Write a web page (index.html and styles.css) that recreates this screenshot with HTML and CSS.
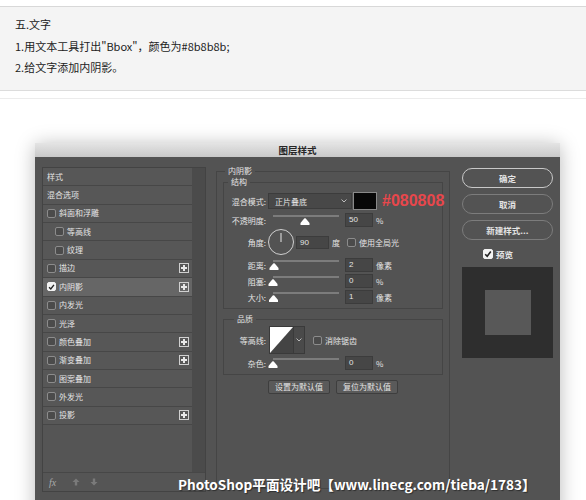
FILE: index.html
```html
<!DOCTYPE html>
<html lang="zh">
<head>
  <meta charset="UTF-8">
  <title>内阴影</title>
  <link rel="stylesheet" href="styles.css">
</head>
<body>
  <div class="note">
    <p>五.文字</p>
    <p>1.用文本工具打出"Bbox"，颜色为#8b8b8b;</p>
    <p>2.给文字添加内阴影。</p>
  </div>
  <div class="rule"></div>

  <div class="dialog">
    <div class="titlebar">图层样式</div>
    <div class="dialog-body">

      <!-- 左侧样式列表 -->
      <div class="styles-panel">
        <div class="styles-list">
          <ul class="rows">
            <li class="row">样式</li>
            <li class="row">混合选项</li>
            <li class="row"><span class="box"></span>斜面和浮雕</li>
            <li class="row sub"><span class="box"></span>等高线</li>
            <li class="row sub"><span class="box"></span>纹理</li>
            <li class="row"><span class="box"></span>描边<span class="plus"></span></li>
            <li class="row active"><span class="box checked"><svg viewBox="0 0 8 8" width="8" height="8"><path d="M1.2 4.2 L3.2 6.2 L6.8 1.6" fill="none" stroke="#222" stroke-width="1.6"/></svg></span>内阴影<span class="plus"></span></li>
            <li class="row"><span class="box"></span>内发光</li>
            <li class="row"><span class="box"></span>光泽</li>
            <li class="row"><span class="box"></span>颜色叠加<span class="plus"></span></li>
            <li class="row"><span class="box"></span>渐变叠加<span class="plus"></span></li>
            <li class="row"><span class="box"></span>图案叠加</li>
            <li class="row"><span class="box"></span>外发光</li>
            <li class="row"><span class="box"></span>投影<span class="plus"></span></li>
          </ul>
          <div class="scroll"></div>
        </div>
        <div class="fx-bar">
          <span class="fx">fx</span>
          <svg width="8" height="8" viewBox="0 0 8 8"><path d="M4 0.5 L7.5 4 L5.2 4 L5.2 7.5 L2.8 7.5 L2.8 4 L0.5 4 Z" fill="#7a7a7a"/></svg>
          <svg width="8" height="8" viewBox="0 0 8 8"><path d="M4 7.5 L7.5 4 L5.2 4 L5.2 0.5 L2.8 0.5 L2.8 4 L0.5 4 Z" fill="#7a7a7a"/></svg>
        </div>
      </div>

      <!-- 中间设置 -->
      <div class="settings">
        <fieldset class="group outer">
          <legend>内阴影</legend>

          <fieldset class="group inner">
            <legend>结构</legend>
            <div class="field mode">
              <span class="lbl">混合模式:</span>
              <span class="select">正片叠底<svg width="6" height="4" viewBox="0 0 6 4"><path d="M0.5 0.5 L3 3 L5.5 0.5" fill="none" stroke="#bbb" stroke-width="1"/></svg></span>
              <span class="swatch"></span>
              <span class="hex">#080808</span>
            </div>
            <div class="field opacity">
              <span class="lbl">不透明度:</span>
              <svg class="slider" width="76" height="14" viewBox="0 0 76 14"><line x1="5" y1="3" x2="71" y2="3" stroke="#7c7c7c" stroke-width="2"/><path d="M32.5 12 L41.5 12 L41.5 10 L37.8 5.6 Q37 5 36.2 5.6 L32.5 10 Z" fill="#fff"/></svg>
              <span class="num">50</span><span class="unit">%</span>
            </div>
            <div class="field angle">
              <span class="lbl">角度:</span>
              <svg class="dial" width="28" height="28" viewBox="0 0 28 28"><circle cx="14" cy="14" r="12.5" fill="none" stroke="#cfcfcf" stroke-width="1"/><line x1="14" y1="14" x2="14" y2="5" stroke="#cfcfcf" stroke-width="1.2"/></svg>
              <span class="num wide">90</span><span class="unit">度</span>
              <span class="box"></span><span class="chk-text">使用全局光</span>
            </div>
            <div class="field short">
              <span class="lbl">距离:</span>
              <svg class="slider" width="76" height="14" viewBox="0 0 76 14"><line x1="5" y1="3" x2="71" y2="3" stroke="#7c7c7c" stroke-width="2"/><path d="M1.5 12 L10.5 12 L10.5 10 L6.8 5.6 Q6 5 5.2 5.6 L1.5 10 Z" fill="#fff"/></svg>
              <span class="num">2</span><span class="unit">像素</span>
            </div>
            <div class="field short">
              <span class="lbl">阻塞:</span>
              <svg class="slider" width="76" height="14" viewBox="0 0 76 14"><line x1="5" y1="3" x2="71" y2="3" stroke="#7c7c7c" stroke-width="2"/><path d="M0.5 12 L9.5 12 L9.5 10 L5.8 5.6 Q5 5 4.2 5.6 L0.5 10 Z" fill="#fff"/></svg>
              <span class="num">0</span><span class="unit">%</span>
            </div>
            <div class="field short">
              <span class="lbl">大小:</span>
              <svg class="slider" width="76" height="14" viewBox="0 0 76 14"><line x1="5" y1="3" x2="71" y2="3" stroke="#7c7c7c" stroke-width="2"/><path d="M1 12 L10 12 L10 10 L6.3 5.6 Q5.5 5 4.7 5.6 L1 10 Z" fill="#fff"/></svg>
              <span class="num">1</span><span class="unit">像素</span>
            </div>
          </fieldset>

          <fieldset class="group inner quality">
            <legend>品质</legend>
            <div class="field contour-row">
              <span class="lbl">等高线:</span>
              <span class="contour">
                <svg width="23" height="26" viewBox="0 0 23 26"><rect width="23" height="26" fill="#444"/><path d="M0 0 L23 0 L0 26 Z" fill="#fff"/></svg>
                <span class="drop"><svg width="6" height="4" viewBox="0 0 6 4"><path d="M0.5 0.5 L3 3 L5.5 0.5" fill="none" stroke="#bbb" stroke-width="1"/></svg></span>
              </span>
              <span class="box"></span><span class="chk-text">消除锯齿</span>
            </div>
            <div class="field noise">
              <span class="lbl">杂色:</span>
              <svg class="slider" width="76" height="14" viewBox="0 0 76 14"><line x1="5" y1="3" x2="71" y2="3" stroke="#7c7c7c" stroke-width="2"/><path d="M0.5 12 L9.5 12 L9.5 10 L5.8 5.6 Q5 5 4.2 5.6 L0.5 10 Z" fill="#fff"/></svg>
              <span class="num">0</span><span class="unit">%</span>
            </div>
          </fieldset>

          <div class="defaults">
            <span class="btn-small">设置为默认值</span>
            <span class="btn-small">复位为默认值</span>
          </div>
        </fieldset>
      </div>

      <!-- 右侧按钮 -->
      <div class="actions">
        <span class="pill primary">确定</span>
        <span class="pill">取消</span>
        <span class="pill">新建样式...</span>
        <div class="preview-toggle">
          <span class="box checked"><svg viewBox="0 0 8 8" width="8" height="8"><path d="M1.2 4.2 L3.2 6.2 L6.8 1.6" fill="none" stroke="#222" stroke-width="1.6"/></svg></span>预览
        </div>
        <div class="preview"><div class="preview-square"></div></div>
      </div>
    </div>

    <div class="watermark">PhotoShop平面设计吧【www.linecg.com/tieba/1783】</div>
  </div>
</body>
</html>
```

FILE: styles.css
```css
body {
  margin: 0;
  background: #fff;
  font-family: "Noto Sans CJK SC", "Liberation Sans", sans-serif;
  overflow: hidden;
}

/* 顶部说明 */
.note {
  margin-top: 6px;
  height: 85px;
  padding: 7px 15px 0;
  box-sizing: border-box;
  background: #f4f4f4;
  border-top: 1px solid #d8d8d8;
  border-bottom: 1px solid #dcdcdc;
}

.note p {
  margin: 0;
  font-size: 11px;
  line-height: 21.5px;
  color: #222;
}

.rule {
  margin-top: 7px;
  border-top: 1px solid #ececec;
}

/* 对话框 */
.dialog {
  position: relative;
  margin: 44px 0 0 35px;
  width: 525px;
  height: 380px;
  background: #535353;
  box-shadow: 0 2px 18px rgba(0, 0, 0, 0.28);
  color: #e4e4e4;
  font-size: 8px;
}

.titlebar {
  height: 14px;
  line-height: 14px;
  text-align: center;
  font-size: 9.5px;
  font-weight: bold;
  color: #262626;
  background: linear-gradient(#e4e4e4, #c9c9c9);
}

.dialog-body {
  display: flex;
  align-items: flex-start;
  padding: 10px 7px 0;
}

/* 左侧列表 */
.styles-panel {
  width: 164px;
  border: 1px solid #434343;
  box-sizing: border-box;
  background: #555;
}

.styles-list {
  display: flex;
  height: 304px;
}

.rows {
  list-style: none;
  margin: 0;
  padding: 0;
  width: 149px;
}

.row {
  display: flex;
  align-items: center;
  height: 18.36px;
  box-sizing: border-box;
  padding-left: 4px;
  padding-right: 3px;
  border-bottom: 1px solid #474747;
  background: #575757;
  line-height: 1;
}

.row.sub {
  padding-left: 12px;
}

.row.active {
  background: #666;
}

.box {
  display: inline-flex;
  align-items: center;
  justify-content: center;
  width: 7px;
  height: 7px;
  margin-right: 3px;
  border: 1px solid #8c8c8c;
  border-radius: 2px;
  background: #4b4b4b;
  flex: none;
}

.box.checked {
  background: #f2f2f2;
  border-color: #f2f2f2;
}

.plus {
  margin-left: auto;
  width: 8px;
  height: 8px;
  border: 1px solid #d0d0d0;
  position: relative;
}

.plus::before,
.plus::after {
  content: "";
  position: absolute;
  background: #e8e8e8;
}

.plus::before {
  left: 1px;
  right: 1px;
  top: 3px;
  height: 2px;
}

.plus::after {
  top: 1px;
  bottom: 1px;
  left: 3px;
  width: 2px;
}

.scroll {
  width: 13px;
  background: #4b4b4b;
}

.fx-bar {
  display: flex;
  align-items: center;
  gap: 10px;
  height: 18px;
  padding-left: 6px;
  border-top: 1px solid #474747;
}

.fx {
  font-family: "Liberation Serif", serif;
  font-style: italic;
  font-size: 10px;
  color: #aaa;
  width: 13px;
}

/* 中间设置 */
.settings {
  width: 234px;
  margin: -2px 0 0 10px;
}

.group {
  margin: 0;
  padding: 0 4px 3px;
  border: 1px solid #454545;
  min-width: 0;
}

.group legend {
  padding: 0 3px;
  font-size: 8px;
  line-height: 12px;
  color: #e4e4e4;
}

.group.outer {
  padding: 0 6px;
  height: 324px;
  box-sizing: border-box;
}

.group.outer > legend {
  margin-left: 2px;
}

.group.inner {
  margin-top: -1px;
}

.group.quality {
  margin-top: 4px;
  padding-bottom: 4px;
}

.group.quality > legend {
  margin-left: 6px;
}

.field {
  display: flex;
  align-items: center;
  height: 18px;
  white-space: nowrap;
}

.field > * {
  flex: none;
}

.field.mode {
  margin-top: 4px;
}

.field.opacity {
  margin-top: 1px;
}

.field.angle {
  height: 26px;
}

.field.short {
  height: 16px;
}

.field.angle + .short {
  margin-top: 2px;
}

.lbl {
  width: 38px;
  text-align: right;
}

.select {
  display: flex;
  align-items: center;
  justify-content: space-between;
  width: 84px;
  height: 16px;
  margin-left: 2px;
  padding: 0 4px 0 6px;
  box-sizing: border-box;
  background: #484848;
  border: 1px solid #3c3c3c;
}

.swatch {
  width: 24px;
  height: 18px;
  margin-left: 1px;
  box-sizing: border-box;
  background: #080808;
  border: 1px solid #8a8a8a;
}

.hex {
  margin-left: 5px;
  font-family: "Liberation Sans", sans-serif;
  font-weight: bold;
  font-size: 16px;
  color: #e8474c;
}

.slider {
  margin-left: 2px;
}

.num {
  width: 28px;
  height: 14px;
  margin-left: 1px;
  padding-left: 3px;
  box-sizing: border-box;
  line-height: 12px;
  background: #464646;
  border: 1px solid #3c3c3c;
  font-family: "Liberation Sans", sans-serif;
  font-size: 8px;
}

.num.wide {
  width: 33px;
  height: 13px;
}

.unit {
  margin-left: 3px;
}

.dial {
  margin-left: 1px;
}

.angle .unit {
  margin-right: 7px;
}

.field.contour-row {
  height: 26px;
  margin-top: 2px;
}

.contour {
  display: flex;
  margin-left: 3px;
  margin-right: 8px;
  border: 1px solid #3a3a3a;
}

.contour svg {
  display: block;
}

.drop {
  display: flex;
  align-items: center;
  justify-content: center;
  width: 10px;
  background: #4a4a4a;
  border-left: 1px solid #3a3a3a;
}

.field.noise {
  height: 14px;
  margin-top: 3px;
}

.defaults {
  display: flex;
  justify-content: center;
  gap: 6px;
  margin-top: 5px;
}

.btn-small {
  width: 62px;
  height: 14px;
  line-height: 12px;
  box-sizing: border-box;
  text-align: center;
  background: #5a5a5a;
  border: 1px solid #3e3e3e;
  border-radius: 2px;
}

/* 右侧 */
.actions {
  width: 91px;
  margin: 1px 0 0 12px;
  display: flex;
  flex-direction: column;
}

.pill {
  height: 20px;
  line-height: 18px;
  margin-bottom: 6px;
  box-sizing: border-box;
  text-align: center;
  border: 1px solid #7c7c7c;
  border-radius: 10px;
  font-size: 8.5px;
  font-weight: bold;
}

.pill.primary {
  border-color: #c8c8c8;
  border-width: 1.5px;
}

.preview-toggle {
  display: flex;
  align-items: center;
  height: 14px;
  margin-top: 1px;
  padding-left: 21px;
  font-size: 8.5px;
  font-weight: bold;
}

.preview-toggle .box {
  width: 8px;
  height: 8px;
}

.preview {
  height: 91px;
  margin-top: 6px;
  background: #2e2e2e;
  display: flex;
  align-items: center;
  justify-content: center;
}

.preview-square {
  width: 46px;
  height: 45px;
  background: #585858;
}

.watermark {
  position: absolute;
  left: 143px;
  top: 331px;
  font-size: 13.6px;
  font-weight: bold;
  color: #fff;
  white-space: nowrap;
  text-shadow: 1px 1px 1px rgba(0, 0, 0, 0.45);
}
```
